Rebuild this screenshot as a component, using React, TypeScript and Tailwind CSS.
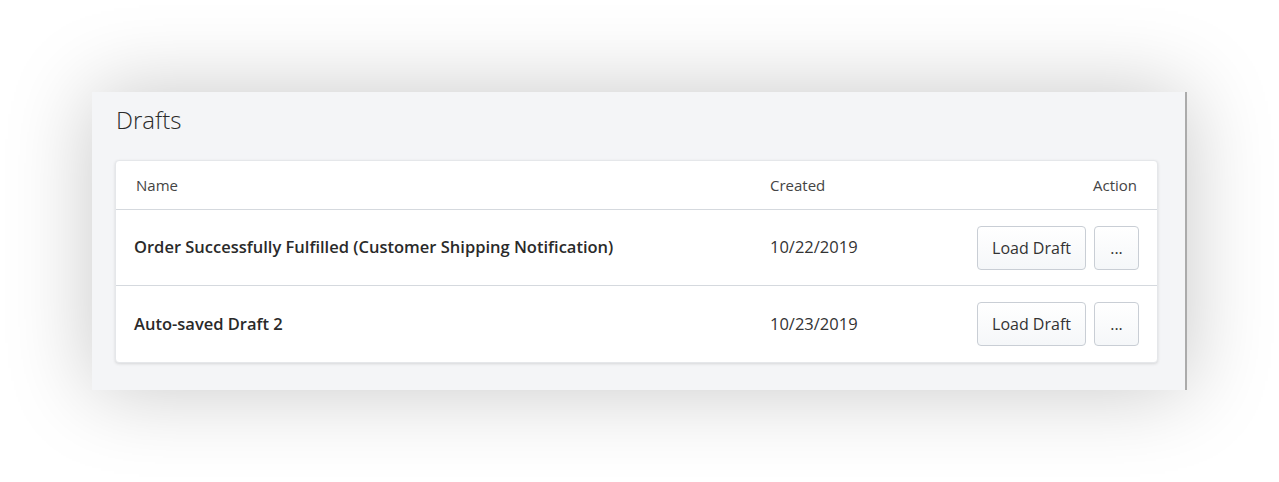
import React from 'react';

const drafts = [
  { name: 'Order Successfully Fulfilled (Customer Shipping Notification)', created: '10/22/2019' },
  { name: 'Auto-saved Draft 2', created: '10/23/2019' },
];

const btn =
  'h-[44px] rounded-[4px] border border-[#c9ced5] bg-gradient-to-b from-white to-[#f5f7f9] text-[16px] text-[#333] flex items-center justify-center';

export default function App() {
  return (
    <div
      className="w-[1279px] h-[482px] bg-white pt-[92px] pl-[92px]"
      style={{ fontFamily: '"Open Sans", "Noto Sans", sans-serif' }}
    >
      <div className="w-[1095px] h-[298px] bg-[#f4f5f7] border-r-2 border-[#ababab] shadow-[0_0_80px_rgba(0,0,0,0.22)] pt-[12px] pl-[23px] pr-[27px]">
        <h1 className="text-[24px] leading-[32px] font-light text-[#2a2a2a] ml-px">Drafts</h1>
        <div className="mt-[24px] bg-white rounded-[4px] shadow-[0_1px_3px_rgba(0,0,0,0.12)] border border-[#e5e7ea]">
          <div className="flex items-center h-[49px] pl-[20px] pr-[20px] border-b border-[#d5d9de] text-[15px] text-[#444]">
            <div className="w-[634px]">Name</div>
            <div className="flex-1">Created</div>
            <div>Action</div>
          </div>
          {drafts.map((d, i) => (
            <div
              key={d.name}
              className={
                'flex items-center h-[76px] pl-[18px] pr-[18px] ' +
                (i < drafts.length - 1 ? 'border-b border-[#d5d9de]' : '')
              }
            >
              <div className="w-[636px] text-[16.5px] font-semibold text-[#2a2a2a]">{d.name}</div>
              <div className="flex-1 text-[16.5px] text-[#333]">{d.created}</div>
              <div className="flex gap-[8px]">
                <button className={btn + ' w-[109px]'}>Load Draft</button>
                <button className={btn + ' w-[45px]'}>...</button>
              </div>
            </div>
          ))}
        </div>
      </div>
    </div>
  );
}
